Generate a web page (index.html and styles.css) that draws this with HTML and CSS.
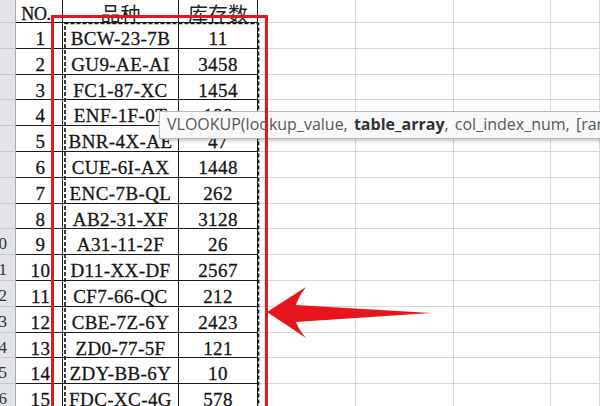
FILE: index.html
```html
<!DOCTYPE html>
<html>
<head>
<meta charset="utf-8">
<link rel="stylesheet" href="styles.css">
</head>
<body>
<div class="sheet">
  <div class="cell rh"></div><div class="cell t hd no-hd">NO.</div><div class="cell t hd cjk">品种</div><div class="cell t hd cjk">库存数</div><div class="cell"></div><div class="cell"></div><div class="cell"></div><div class="cell"></div>
  <div class="cell rh"></div><div class="cell t no">1</div><div class="cell t">BCW-23-7B</div><div class="cell t">11</div><div class="cell"></div><div class="cell"></div><div class="cell"></div><div class="cell"></div>
  <div class="cell rh"></div><div class="cell t no">2</div><div class="cell t">GU9-AE-AI</div><div class="cell t">3458</div><div class="cell"></div><div class="cell"></div><div class="cell"></div><div class="cell"></div>
  <div class="cell rh"></div><div class="cell t no">3</div><div class="cell t">FC1-87-XC</div><div class="cell t">1454</div><div class="cell"></div><div class="cell"></div><div class="cell"></div><div class="cell"></div>
  <div class="cell rh"></div><div class="cell t no">4</div><div class="cell t">ENF-1F-0T</div><div class="cell t">188</div><div class="cell"></div><div class="cell"></div><div class="cell"></div><div class="cell"></div>
  <div class="cell rh"></div><div class="cell t no">5</div><div class="cell t">BNR-4X-AE</div><div class="cell t">47</div><div class="cell"></div><div class="cell"></div><div class="cell"></div><div class="cell"></div>
  <div class="cell rh"></div><div class="cell t no">6</div><div class="cell t">CUE-6I-AX</div><div class="cell t">1448</div><div class="cell"></div><div class="cell"></div><div class="cell"></div><div class="cell"></div>
  <div class="cell rh"></div><div class="cell t no">7</div><div class="cell t">ENC-7B-QL</div><div class="cell t">262</div><div class="cell"></div><div class="cell"></div><div class="cell"></div><div class="cell"></div>
  <div class="cell rh"></div><div class="cell t no">8</div><div class="cell t">AB2-31-XF</div><div class="cell t">3128</div><div class="cell"></div><div class="cell"></div><div class="cell"></div><div class="cell"></div>
  <div class="cell rh"><span>10</span></div><div class="cell t no">9</div><div class="cell t">A31-11-2F</div><div class="cell t">26</div><div class="cell"></div><div class="cell"></div><div class="cell"></div><div class="cell"></div>
  <div class="cell rh"><span>11</span></div><div class="cell t no">10</div><div class="cell t">D11-XX-DF</div><div class="cell t">2567</div><div class="cell"></div><div class="cell"></div><div class="cell"></div><div class="cell"></div>
  <div class="cell rh"><span>12</span></div><div class="cell t no">11</div><div class="cell t">CF7-66-QC</div><div class="cell t">212</div><div class="cell"></div><div class="cell"></div><div class="cell"></div><div class="cell"></div>
  <div class="cell rh"><span>13</span></div><div class="cell t no">12</div><div class="cell t">CBE-7Z-6Y</div><div class="cell t">2423</div><div class="cell"></div><div class="cell"></div><div class="cell"></div><div class="cell"></div>
  <div class="cell rh"><span>14</span></div><div class="cell t no">13</div><div class="cell t">ZD0-77-5F</div><div class="cell t">121</div><div class="cell"></div><div class="cell"></div><div class="cell"></div><div class="cell"></div>
  <div class="cell rh"><span>15</span></div><div class="cell t no">14</div><div class="cell t">ZDY-BB-6Y</div><div class="cell t">10</div><div class="cell"></div><div class="cell"></div><div class="cell"></div><div class="cell"></div>
  <div class="cell rh"><span>16</span></div><div class="cell t no">15</div><div class="cell t">FDC-XC-4G</div><div class="cell t">578</div><div class="cell"></div><div class="cell"></div><div class="cell"></div><div class="cell"></div>
</div>

<svg class="overlay ants" width="600" height="406" viewBox="0 0 600 406">
  <path d="M65 420 V23.5 H258.5 V420" fill="none" stroke="#1c1c1c" stroke-width="1.7" stroke-dasharray="4 2"/>
</svg>

<div class="tip">VLOOKUP(lookup_value, <b>table_array</b>, col_index_num, [range_lookup])</div>

<svg class="overlay marks" width="600" height="406" viewBox="0 0 600 406">
  <path d="M52.5 420 V16.5 H266.5 V420" fill="none" stroke="#dc1a20" stroke-width="3"/>
  <path d="M267 312 L306 287 Q299 296 296 305 L431 313 L296 322 Q299 330 306 338 Z" fill="#e8161c"/>
</svg>
</body>
</html>
```

FILE: styles.css
```css
html, body {
  margin: 0;
  padding: 0;
}
body {
  width: 600px;
  height: 406px;
  overflow: hidden;
  position: relative;
  background: #ffffff;
  font-family: "Liberation Serif", "Noto Sans CJK SC", serif;
  color: #161616;
}
.sheet {
  display: grid;
  grid-template-columns: 16px 47px 116px 79px 98px 98px 97px 49px;
  grid-template-rows: 23px repeat(15, 25.8px);
}
.cell {
  box-sizing: border-box;
  border-right: 1px solid #d6d6d6;
  border-bottom: 1px solid #d6d6d6;
  min-width: 0;
}
.rh {
  background: #e2e4e8;
  border-right-color: #a8abb0;
  border-bottom-color: #c4c7cc;
  overflow: hidden;
  display: flex;
  justify-content: flex-end;
  padding-right: 8px;
  font-size: 17px;
  line-height: 20px;
  padding-top: 5px;
  color: #333;
}
.rh span {
  flex: none;
}
.t {
  border-right-color: #1a1a1a;
  border-bottom-color: #1a1a1a;
  font-size: 19px;
  line-height: 20px;
  letter-spacing: 0.4px;
  padding-top: 6px;
  text-align: center;
  white-space: nowrap;
  -webkit-text-stroke: 0.3px #161616;
}
.no {
  padding-left: 3px;
}
.hd {
  padding-top: 4px;
  font-size: 18px;
  letter-spacing: -0.3px;
}
.no-hd {
  padding-right: 6px;
}
.cjk {
  font-family: "Noto Sans CJK SC", sans-serif;
  font-size: 20px;
  line-height: 20px;
  letter-spacing: 0;
  padding-top: 4px;
  -webkit-text-stroke: 0;
  color: #222;
}
.overlay {
  position: absolute;
  left: 0;
  top: 0;
  pointer-events: none;
}
.tip {
  position: absolute;
  left: 159px;
  top: 111px;
  width: 470px;
  height: 28px;
  box-sizing: border-box;
  background: #f9f9f9;
  border: 1px solid #b8b8b8;
  box-shadow: 1px 2px 3px rgba(0, 0, 0, 0.22);
  padding-left: 7px;
  font-family: "Open Sans", sans-serif;
  font-size: 16px;
  word-spacing: 2px;
  line-height: 25px;
  color: #585858;
  white-space: nowrap;
  overflow: hidden;
}
.tip b {
  color: #333333;
  font-weight: 700;
}
```
